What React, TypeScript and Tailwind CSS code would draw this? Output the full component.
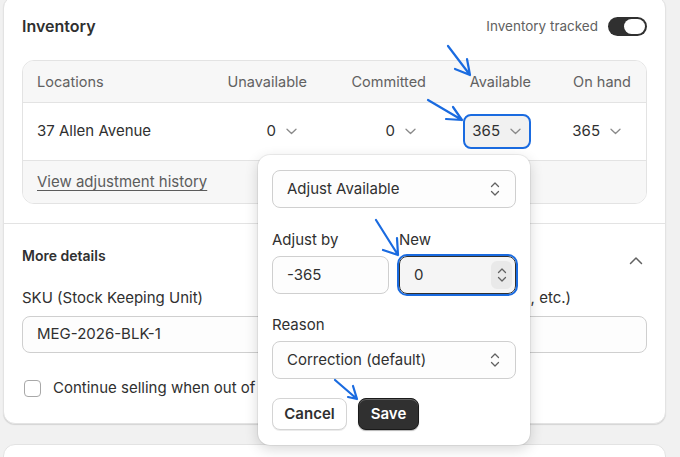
import React from 'react';

function ChevronDown({ className = '' }: { className?: string }) {
  return (
    <svg width="11" height="7" viewBox="0 0 11 7" fill="none" className={className}>
      <path d="M1 1.2l4.5 4.3L10 1.2" stroke="#8a8a8a" strokeWidth="1.3" strokeLinecap="round" strokeLinejoin="round" />
    </svg>
  );
}

function UpDown() {
  return (
    <svg width="10" height="16" viewBox="0 0 10 16" fill="none">
      <path d="M1.5 5.5L5 2l3.5 3.5M1.5 10.5L5 14l3.5-3.5" stroke="#616161" strokeWidth="1.3" strokeLinecap="round" strokeLinejoin="round" />
    </svg>
  );
}

function QtyButton({ value, active = false }: { value: string; active?: boolean }) {
  return (
    <div className="flex justify-end">
      <div
        className={
          active
            ? 'flex h-[35px] items-center gap-[10px] rounded-lg border-2 border-[#1a6be0] bg-[#f1f1f1] pl-[7px] pr-[8px]'
            : 'flex h-[35px] items-center gap-[10px] rounded-lg border-2 border-transparent pl-[7px] pr-[8px]'
        }
      >
        <span>{value}</span>
        <ChevronDown />
      </div>
    </div>
  );
}

function Select({ label }: { label: string }) {
  return (
    <div className="flex h-[38px] items-center justify-between rounded-lg border border-[#cfcfcf] bg-[#fdfdfd] pl-[14px] pr-[15px]">
      <span>{label}</span>
      <UpDown />
    </div>
  );
}

export default function App() {
  return (
    <div className="relative h-[457px] overflow-hidden bg-[#f1f1f1] pl-[3px] pr-[14px] font-['Inter',sans-serif] text-[15px] text-[#303030]">
      {/* main card */}
      <div className="-mt-[4px] rounded-xl border border-[#e3e3e3] bg-white shadow-[0_1px_1px_rgba(0,0,0,0.12)]">
        <section className="px-[18px] pt-[19px] pb-[19px]">
          <div className="flex h-[20px] items-center justify-between">
            <h2 className="text-[16px] font-semibold">Inventory</h2>
            <div className="flex items-center gap-[10px]">
              <span className="text-[13.5px] text-[#616161]">Inventory tracked</span>
              <div className="flex h-[19px] w-[39px] items-center justify-end rounded-full bg-[#303030] pr-[2px]">
                <div className="h-[15px] w-[21px] rounded-full bg-white" />
              </div>
            </div>
          </div>

          <div className="mt-[24px] overflow-hidden rounded-xl border border-[#e3e3e3]">
            <div className="grid h-[41px] grid-cols-[1fr_119px_119px_105px_100px] items-center bg-[#f7f7f7] pl-[14px] pr-[15px] text-[14.5px] text-[#616161]">
              <span>Locations</span>
              <span className="text-right">Unavailable</span>
              <span className="text-right">Committed</span>
              <span className="text-right">Available</span>
              <span className="text-right">On hand</span>
            </div>
            <div className="grid h-[58px] grid-cols-[1fr_119px_119px_105px_100px] items-center border-t border-[#e3e3e3] pl-[14px] pr-[15px]">
              <span>37 Allen Avenue</span>
              <QtyButton value="0" />
              <QtyButton value="0" />
              <QtyButton value="365" active />
              <QtyButton value="365" />
            </div>
            <div className="flex h-[43px] items-center border-t border-[#e3e3e3] bg-[#f7f7f7] pl-[14px]">
              <span className="text-[#5c5c5c] underline decoration-1 underline-offset-[3px]">View adjustment history</span>
            </div>
          </div>
        </section>

        <section className="border-t border-[#e3e3e3] px-[18px] pt-[21px] pb-[25px]">
          <div className="flex h-[20px] items-center justify-between">
            <h3 className="text-[14px] font-semibold">More details</h3>
            <svg width="14" height="9" viewBox="0 0 14 9" fill="none" className="mr-[4px] mt-[10px]">
              <path d="M1.5 7.5L7 2l5.5 5.5" stroke="#616161" strokeWidth="1.5" strokeLinecap="round" strokeLinejoin="round" />
            </svg>
          </div>

          <div className="mt-[23px] grid grid-cols-2 gap-x-[16px]">
            <div>
              <label className="block h-[20px] leading-[20px]">SKU (Stock Keeping Unit)</label>
              <div className="mt-[8px] flex h-[37px] items-center rounded-lg border border-[#cfcfcf] bg-[#fdfdfd] pl-[14px]">
                MEG-2026-BLK-1
              </div>
            </div>
            <div>
              <label className="block h-[20px] leading-[20px]">Barcode (ISBN, UPC, GTIN, etc.)</label>
              <div className="mt-[8px] h-[37px] rounded-lg border border-[#cfcfcf] bg-[#fdfdfd]" />
            </div>
          </div>

          <div className="mt-[25px] flex h-[20px] items-center gap-[12px]">
            <div className="ml-[2px] h-[17px] w-[17px] rounded-[4px] border border-[#a8a8a8] bg-white" />
            <span>Continue selling when out of stock</span>
          </div>
        </section>
      </div>

      {/* next card */}
      <div className="mt-[20px] h-[40px] rounded-xl border border-[#e3e3e3] bg-white" />

      {/* adjust popover */}
      <div className="absolute left-[258px] top-[155px] w-[272px] rounded-xl bg-white px-[14px] pt-[15px] pb-[15px] shadow-[0_0_0_1px_rgba(0,0,0,0.06),0_4px_14px_rgba(0,0,0,0.16)]">
        <Select label="Adjust Available" />

        <div className="mt-[22px] grid grid-cols-2 gap-x-[10px]">
          <div>
            <div className="h-[20px] leading-[20px]">Adjust by</div>
            <div className="mt-[6px] flex h-[38px] items-center rounded-lg border border-[#cfcfcf] bg-[#fdfdfd] pl-[14px]">
              -365
            </div>
          </div>
          <div>
            <div className="h-[20px] leading-[20px]">New</div>
            <div className="mt-[6px] flex h-[38px] items-center justify-between rounded-lg border border-[#303030] bg-[#f5f5f5] pl-[14px] pr-[3px] outline-2 outline-offset-0 outline-[#1a6be0]">
              <span>0</span>
              <div className="flex h-[28px] w-[21px] items-center justify-center rounded-md bg-[#e9e9e9]">
                <UpDown />
              </div>
            </div>
          </div>
        </div>

        <div className="mt-[21px] h-[20px] leading-[20px]">Reason</div>
        <div className="mt-[6px]">
          <Select label="Correction (default)" />
        </div>

        <div className="mt-[19px] flex gap-[11px]">
          <button className="h-[32px] w-[75px] rounded-lg border border-[#d4d4d4] bg-white font-semibold shadow-[0_1px_0_rgba(0,0,0,0.08)]">
            Cancel
          </button>
          <button className="h-[32px] w-[61px] rounded-lg border border-[#1a1a1a] bg-[#303030] font-semibold text-white shadow-[inset_0_1px_0_rgba(255,255,255,0.25),0_1px_1px_rgba(0,0,0,0.3)]">
            Save
          </button>
        </div>
      </div>

      {/* annotation arrows */}
      <svg className="pointer-events-none absolute inset-0" width="680" height="457" fill="none" stroke="#1a6be0" strokeWidth="2.2" strokeLinecap="round" strokeLinejoin="round">
        <path d="M448 46L470 75M467 59L470 75L455 69" />
        <path d="M428 100L462 120M453 107L462 120L446 119" />
        <path d="M376 220L398 255M397 238L398 255L383 250" />
        <path d="M335 380L357 399M353 386L357 399L348 397" />
      </svg>
    </div>
  );
}
